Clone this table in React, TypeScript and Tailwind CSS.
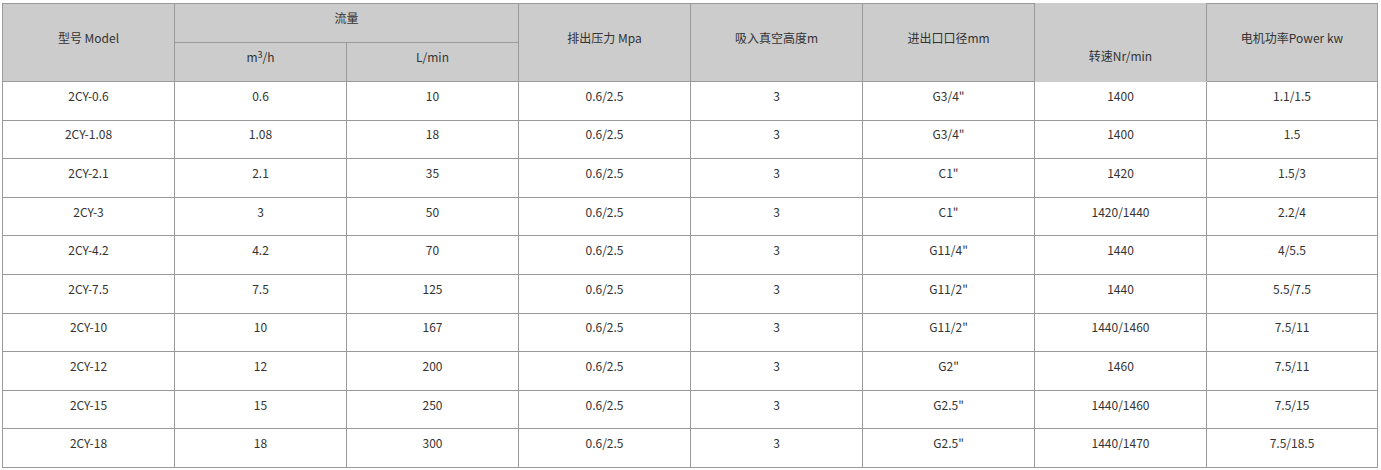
import React from 'react'

const rows = [
  ['2CY-0.6', '0.6', '10', '0.6/2.5', '3', 'G3/4"', '1400', '1.1/1.5'],
  ['2CY-1.08', '1.08', '18', '0.6/2.5', '3', 'G3/4"', '1400', '1.5'],
  ['2CY-2.1', '2.1', '35', '0.6/2.5', '3', 'C1"', '1420', '1.5/3'],
  ['2CY-3', '3', '50', '0.6/2.5', '3', 'C1"', '1420/1440', '2.2/4'],
  ['2CY-4.2', '4.2', '70', '0.6/2.5', '3', 'G11/4"', '1440', '4/5.5'],
  ['2CY-7.5', '7.5', '125', '0.6/2.5', '3', 'G11/2"', '1440', '5.5/7.5'],
  ['2CY-10', '10', '167', '0.6/2.5', '3', 'G11/2"', '1440/1460', '7.5/11'],
  ['2CY-12', '12', '200', '0.6/2.5', '3', 'G2"', '1460', '7.5/11'],
  ['2CY-15', '15', '250', '0.6/2.5', '3', 'G2.5"', '1440/1460', '7.5/15'],
  ['2CY-18', '18', '300', '0.6/2.5', '3', 'G2.5"', '1440/1470', '7.5/18.5'],
]

const th = 'border border-[#9a9a9a] bg-[#cccccc] font-normal text-center align-middle pb-[10px]'
const td = 'border border-[#9a9a9a] text-center align-middle pb-[10px]'

export default function App() {
  return (
    <div className="bg-white w-[1381px] h-[470px] pt-[3px] pl-[2px] text-[12px] text-[#333333] font-['Microsoft_YaHei','Noto_Sans_CJK_SC',sans-serif]">
      <table className="table-fixed border-collapse w-[1376px]">
        <colgroup>
          <col className="w-[172px]" />
          <col className="w-[172px]" />
          <col className="w-[172px]" />
          <col className="w-[172px]" />
          <col className="w-[172px]" />
          <col className="w-[172px]" />
          <col className="w-[172px]" />
          <col className="w-[171px]" />
        </colgroup>
        <thead>
          <tr className="h-[39px]">
            <th rowSpan={2} className={th}>型号 Model</th>
            <th colSpan={2} className={th}>流量</th>
            <th rowSpan={2} className={th}>排出压力 Mpa</th>
            <th rowSpan={2} className={th}>吸入真空高度m</th>
            <th rowSpan={2} className={th}>进出口口径mm</th>
            <th
              rowSpan={2}
              className="border border-[#9a9a9a] border-t-[#cccccc] border-b-[#cccccc] bg-[#cccccc] font-normal text-center align-bottom pb-[16px]"
            >
              转速Nr/min
            </th>
            <th rowSpan={2} className={th}>电机功率Power kw</th>
          </tr>
          <tr className="h-[39px]">
            <th className={th}>
              m<sup className="text-[9px]">3</sup>/h
            </th>
            <th className={th}>L/min</th>
          </tr>
        </thead>
        <tbody>
          {rows.map((r) => (
            <tr key={r[0]} className="h-[38.6px]">
              {r.map((c, i) => (
                <td key={i} className={td}>
                  {c}
                </td>
              ))}
            </tr>
          ))}
        </tbody>
      </table>
    </div>
  )
}
